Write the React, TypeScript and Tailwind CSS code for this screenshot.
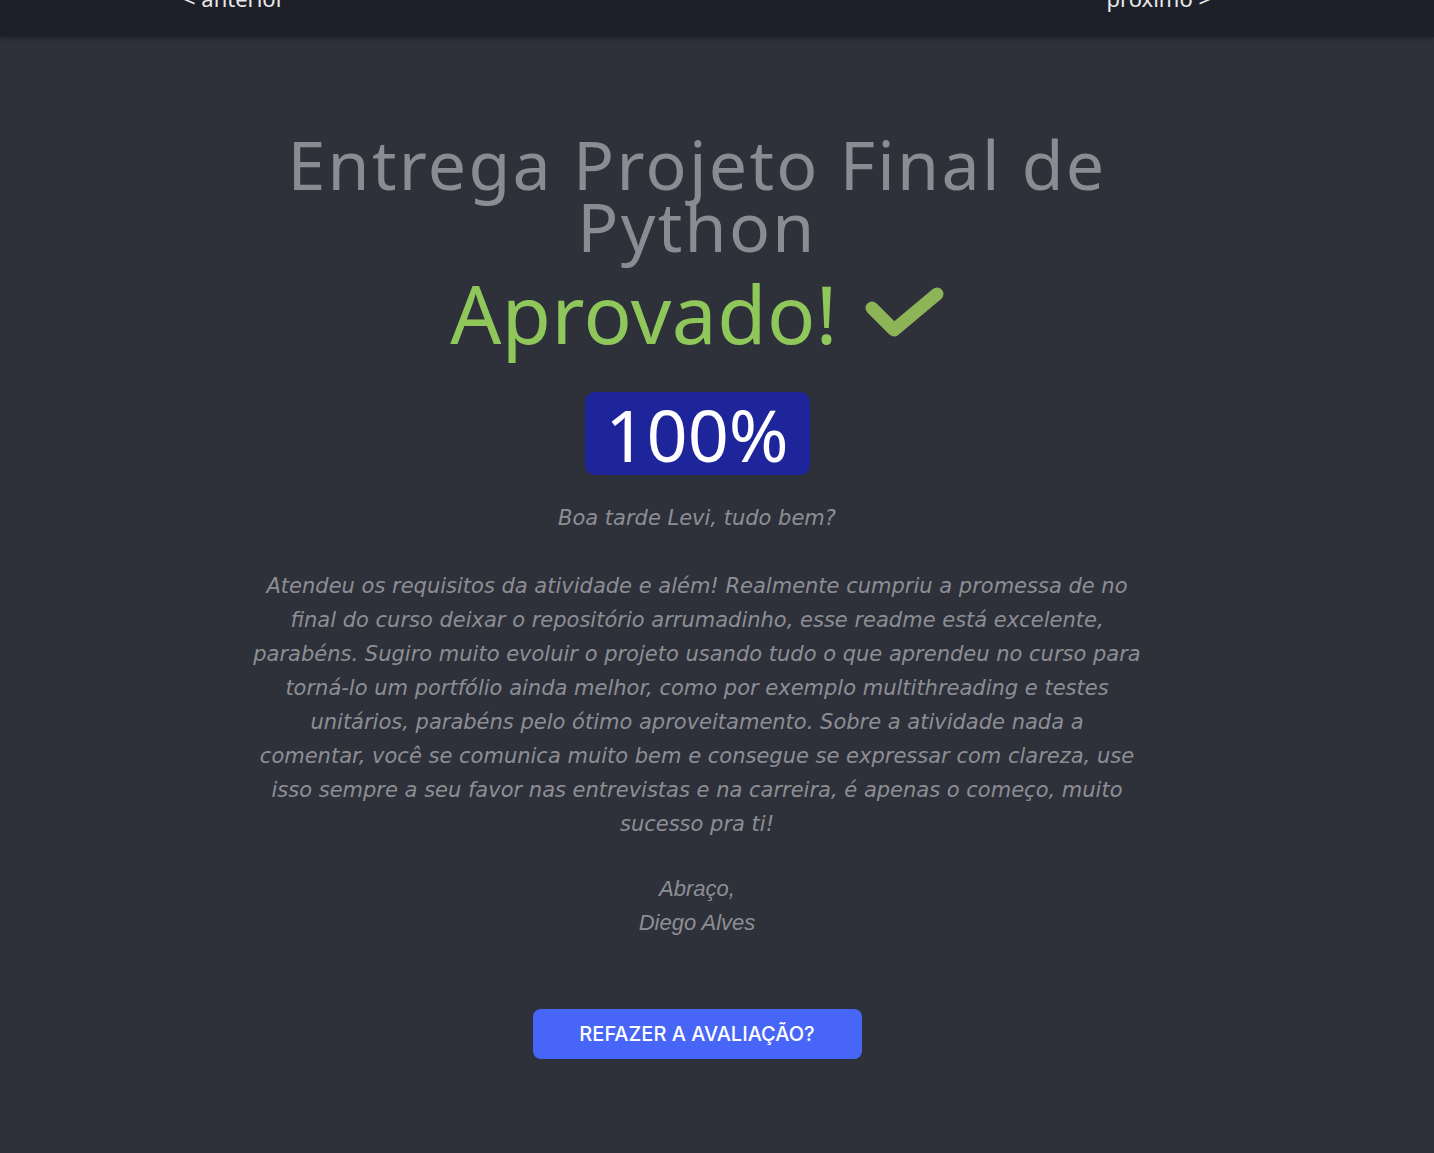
import React from "react";

const body = [
  "Atendeu os requisitos da atividade e além! Realmente cumpriu a promessa de no",
  "final do curso deixar o repositório arrumadinho, esse readme está excelente,",
  "parabéns. Sugiro muito evoluir o projeto usando tudo o que aprendeu no curso para",
  "torná-lo um portfólio ainda melhor, como por exemplo multithreading e testes",
  "unitários, parabéns pelo ótimo aproveitamento. Sobre a atividade nada a",
  "comentar, você se comunica muito bem e consegue se expressar com clareza, use",
  "isso sempre a seu favor nas entrevistas e na carreira, é apenas o começo, muito",
  "sucesso pra ti!",
];

function Check() {
  return (
    <svg width="80" height="62" viewBox="0 0 80 62" className="ml-[26px] mt-[4px]">
      <path
        d="M8 24 L30 46 L73 10"
        fill="none"
        stroke="#8db457"
        strokeWidth="13"
        strokeLinecap="round"
        strokeLinejoin="round"
      />
    </svg>
  );
}

export default function App() {
  return (
    <div className="min-h-[1153px] bg-[#2e313a] font-['Noto_Sans',sans-serif]">
      <header className="h-[37px] bg-[#1e2029] overflow-hidden shadow-[0_2px_4px_rgba(0,0,0,0.25)]">
        <div className="w-[1028px] ml-[183px] flex justify-between text-[22px] leading-[22px] text-[#e8e8e8] -mt-[13px]">
          <span>&lt; anterior</span>
          <span>próximo &gt;</span>
        </div>
      </header>

      <main className="pr-[40px] flex flex-col items-center text-center">
        <h1 className="mt-[96px] text-[68px] leading-[62px] text-[#8b8c91] tracking-[2.3px]">
          Entrega Projeto Final de
          <br />
          Python
        </h1>

        <div className="mt-[16px] flex items-center">
          <span className="text-[80px] leading-[80px] text-[#8fc75a] tracking-[0.5px]">Aprovado!</span>
          <Check />
        </div>

        <div className="mt-[39px] w-[225px] h-[83px] rounded-[10px] bg-[#1e2499] flex items-center justify-center text-white text-[72px] leading-none">
          100%
        </div>

        <div className="mt-[26px] italic text-[21px] leading-[34px] text-[#8d8e94] font-['DejaVu_Sans',sans-serif]">
          <p>Boa tarde Levi, tudo bem?</p>
          <p className="mt-[34px]">
            {body.map((l, i) => (
              <span key={i} className="block">
                {l}
              </span>
            ))}
          </p>
          <p className="mt-[31px] text-[22px] font-['Liberation_Sans',sans-serif]">
            Abraço,
            <br />
            Diego Alves
          </p>
        </div>

        <button className="mt-[69px] w-[329px] h-[50px] rounded-[8px] bg-[#4766f8] text-white text-[20px] font-medium font-['Inter',sans-serif]">
          REFAZER A AVALIAÇÃO?
        </button>
      </main>
    </div>
  );
}
